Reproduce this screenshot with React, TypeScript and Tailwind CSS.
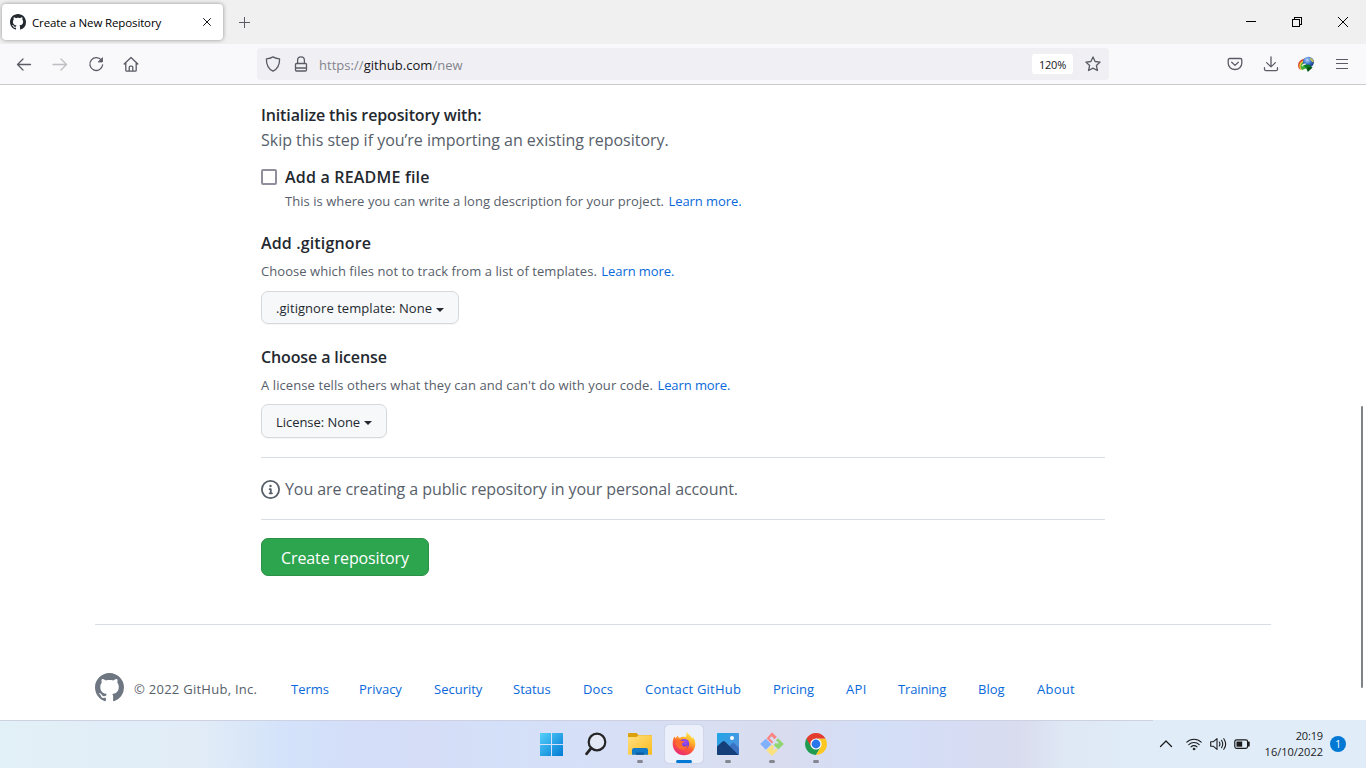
import React from "react";
import type { ReactNode } from "react";

const MARK =
  "M8 0C3.58 0 0 3.58 0 8c0 3.54 2.29 6.53 5.47 7.59.4.07.55-.17.55-.38 0-.19-.01-.82-.01-1.49-2.01.37-2.53-.49-2.69-.94-.09-.23-.48-.94-.82-1.13-.28-.15-.68-.52-.01-.53.63-.01 1.08.58 1.23.82.72 1.21 1.87.87 2.33.66.07-.52.28-.87.51-1.07-1.78-.2-3.64-.89-3.64-3.95 0-.87.31-1.59.82-2.15-.08-.2-.36-1.02.08-2.12 0 0 .67-.21 2.2.82.64-.18 1.32-.27 2-.27.68 0 1.36.09 2 .27 1.53-1.04 2.2-.82 2.2-.82.44 1.1.16 1.92.08 2.12.51.56.82 1.27.82 2.15 0 3.07-1.87 3.75-3.65 3.95.29.25.54.73.54 1.48 0 1.07-.01 1.93-.01 2.2 0 .21.15.46.55.38A8.013 8.013 0 0016 8c0-4.42-3.58-8-8-8z";

function GitHubMark({ className }: { className: string }) {
  return (
    <svg viewBox="0 0 16 16" className={className} fill="currentColor">
      <path fillRule="evenodd" d={MARK} />
    </svg>
  );
}

function Line({ children, className = "", w = 1.3, box = 16 }: { children: ReactNode; className?: string; w?: number; box?: number }) {
  return (
    <svg
      width={box}
      height={box}
      viewBox={`0 0 ${box} ${box}`}
      className={`shrink-0 ${className}`}
      fill="none"
      stroke="currentColor"
      strokeWidth={w}
      strokeLinecap="round"
      strokeLinejoin="round"
    >
      {children}
    </svg>
  );
}

function TabStrip() {
  return (
    <div className="flex h-11 shrink-0 bg-[#f0f0f0] text-black">
      <div className="mt-1 ml-0.5 flex h-9 w-[221px] items-center rounded bg-white pl-2 shadow-[0_0_4px_rgba(0,0,0,0.4)]">
        <GitHubMark className="size-4 text-[#24292f]" />
        <span className="ml-1.5 w-[171px] pt-0.5 text-[11.5px] leading-5 tracking-[-0.13px]">Create a New Repository</span>
        <Line box={8} w={1} className="text-[#15141a]">
          <path d="M.5.5l7 7M7.5.5l-7 7" />
        </Line>
      </div>
      <div className="ml-[15px] flex items-center text-[#5b5b66]">
        <svg width="12" height="12" stroke="currentColor" shapeRendering="crispEdges">
          <path d="M6.500 1v11M1 6.500h11" />
        </svg>
      </div>
      <div className="ml-auto flex items-center gap-9 pr-[18px]">
        <svg width="10" height="10" className="block" shapeRendering="crispEdges">
          <path d="M0 4.5h10" stroke="#000" />
        </svg>
        <svg width="10" height="10" fill="none" stroke="#000" shapeRendering="crispEdges">
          <path d="M.5 2.5h7v7h-7zM2.5 2V.5h7v7H8" />
        </svg>
        <svg width="10" height="10" stroke="#000" strokeWidth="1">
          <path d="M0 0l10 10M10 0L0 10" />
        </svg>
      </div>
    </div>
  );
}

function DownloadManagerIcon() {
  return (
    <svg width="16" height="16" viewBox="0 0 16 16" className="shrink-0">
      <defs>
        <radialGradient id="globe" cx=".4" cy=".3" r=".7">
          <stop offset="0" stopColor="#b8dcff" />
          <stop offset=".5" stopColor="#3f78cf" />
          <stop offset="1" stopColor="#12337a" />
        </radialGradient>
      </defs>
      <path d="M8 2.800C3.500 2.600-.6 5.500.2 10.500c.2 1.300.8 2.300 1.800 3l6-2z" fill="#d8452c" />
      <path d="M8 4.200C4.500 4 1 6.300 1.300 10.300c.1 1.400.6 2.500 1.500 3.400l5.200-2z" fill="#f0c630" />
      <path d="M8 5.500C5 5.500 2.400 7.500 2.600 10.500c.1 1.400.7 2.600 1.600 3.500L9 12z" fill="#3fb03b" />
      <circle cx="10.400" cy="6.200" r="5.500" fill="url(#globe)" />
      <path d="M12 1.600c1.800.7 3.300 2.200 3.700 4.200-.8 1-1.400.4-2.200-.5-.8-.8-1.600-1.800-1.500-3.700z" fill="#c9bf52" />
      <path d="M4.500 8.300l7.800.8.3 1.500 1.900.8-4.700 4.400-1.500-3.400z" fill="#0c7d20" />
      <path d="M9.300 11.300l5.200.1-4.700 4.400z" fill="#084c14" />
      <path d="M3.800 10.300q1.200-2.300 4-2.100" fill="none" stroke="#e9f5dd" strokeWidth="1.200" />
    </svg>
  );
}

function Toolbar() {
  return (
    <div className="flex h-[41px] shrink-0 items-center border-b border-[#cccccd] bg-[#f9f9fb] text-[#5b5b66]">
      <div className="flex w-[241px] items-center gap-5 pl-4">
        <Line>
          <path d="M14.500 8.500H1.500M7 3L1.500 8.500 7 14" />
        </Line>
        <Line className="text-[#bdbdc3]">
          <path d="M1 8.500h13.500M9 3l5.500 5.500L9 14" />
        </Line>
        <Line w={1.3}>
          <path d="M13.700 4.700A6.400 6.400 0 1 0 14.600 9" />
          <path d="M14.500 2v4h-4z" fill="currentColor" strokeWidth={0.8} />
        </Line>
        <Line w={1.3} className="-ml-px">
          <path d="M1.200 8L8 1.500 14.800 8M2.800 6.700v7.600q0 .9.9.9h8.600q.9 0 .9-.9V6.700M6.200 15v-3.600q0-1.200 1.200-1.200h1.200q1.200 0 1.200 1.200V15" />
        </Line>
      </div>
      <div className="ml-4 flex h-8 w-[852px] items-center rounded bg-[#f0f0f4] pr-2 pl-2">
        <Line w={1.3}>
          <path d="M8 .9c2 1.200 4.200 1.800 6.600 2 .1 5.500-1.800 9.800-6.600 12.300C3.200 12.700 1.300 8.400 1.400 2.900 3.800 2.700 6 2.100 8 .9z" />
        </Line>
        <Line w={1.3} className="ml-3">
          <path d="M4.600 7.500V4.300a3.400 3.400 0 0 1 6.800 0v3.200M3.500 7.500h9q1 0 1 1v5.200q0 1.300-1.300 1.300H3.800q-1.300 0-1.300-1.300V8.500q0-1 1-1zM2.500 12h11" />
        </Line>
        <div className="mt-0.5 ml-2.5 flex-1 text-[13px] leading-5 tracking-[0.04px] text-[#84848c]">
          https://<span className="text-[#15141a]">github.com</span>/new
        </div>
        <div className="mr-3 flex h-5 w-[41px] items-center justify-center rounded-[3px] bg-white pt-0.5 text-[11px] tracking-[-0.25px] text-[#15141a]">
          120%
        </div>
        <Line w={1.3}>
          <path d="M8 .9l2.100 4.600 5 .6-3.700 3.400 1 5L8 12.100l-4.400 2.400 1-5L.9 6.100l5-.6z" />
        </Line>
      </div>
      <div className="ml-auto flex items-center gap-5 pr-4">
        <Line w={1.3}>
          <path d="M2.700 2.500h10.600q1.500 0 1.500 1.500v3.300a6.800 6.200 0 0 1-13.600 0V4q0-1.500 1.500-1.500zM4.700 6.300L8 9.400l3.300-3.100" />
        </Line>
        <Line w={1.3} className="-mr-px">
          <path d="M8 .8v10M3.600 6.600L8 10.900l4.400-4.300M1.500 11.700v1.500q0 1.500 1.500 1.500h10q1.500 0 1.500-1.500v-1.500" />
        </Line>
        <DownloadManagerIcon />
        <svg width="16" height="16" fill="none" stroke="currentColor" shapeRendering="crispEdges">
          <path d="M2 3.500h12M2 7.500h12M2 12.500h12" />
        </svg>
      </div>
    </div>
  );
}

function Learn() {
  return <a className="ml-px tracking-[-0.08px] text-[#0969da]">Learn more.</a>;
}

function Caret({ className }: { className: string }) {
  return <span className={`border-x-4 border-t-4 border-x-transparent border-t-[#24292f] ${className}`} />;
}

function NewRepositoryForm() {
  return (
    <main className="ml-[261px] flex w-[844px] flex-col items-start pt-[18px] text-base/6 text-[#24292f]">
      <h2 className="font-semibold tracking-[-0.13px]">Initialize this repository with:</h2>
      <p className="mt-px tracking-[-0.01px] text-[#57606a]">Skip this step if you’re importing an existing repository.</p>

      <label className="mt-[13px] flex h-6 items-center gap-2">
        <span className="size-4 rounded-xs border-2 border-[#8f8f9d] bg-white" />
        <span className="font-semibold tracking-[0.2px]">Add a README file</span>
      </label>
      <p className="mt-0.5 ml-6 text-[13px]/5 tracking-[0.05px] text-[#57606a]">
        This is where you can write a long description for your project. <Learn />
      </p>

      <h2 className="mt-5 font-semibold tracking-[0.14px]">Add .gitignore</h2>
      <p className="mt-1.5 text-[13px]/5 tracking-[0.06px] text-[#57606a]">
        Choose which files not to track from a list of templates. <Learn />
      </p>
      <button className="mt-2.5 flex h-[33px] w-[198px] items-center rounded-[7px] border border-[#d5d8dc] bg-[#f6f8fa] pl-3.5 text-[13px]/5 tracking-[0.06px] shadow-[0_1px_0_rgba(27,31,36,0.04)]">
        .gitignore template: None
        <Caret className="mt-1 ml-1" />
      </button>

      <h2 className="mt-[21px] font-semibold tracking-[-0.12px]">Choose a license</h2>
      <p className="mt-1.5 text-[13px]/5 tracking-[0.09px] text-[#57606a]">
        A license tells others what they can and can't do with your code. <Learn />
      </p>
      <button className="mt-[9px] flex h-[34px] w-[126px] items-center rounded-[7px] border border-[#d5d8dc] bg-[#f6f8fa] pt-px pl-3.5 text-[13px]/5 tracking-[-0.05px] shadow-[0_1px_0_rgba(27,31,36,0.04)]">
        License: None
        <Caret className="mt-0.5 ml-1" />
      </button>

      <div className="mt-[19px] flex h-[63px] w-full items-center gap-[5px] border-y border-[#d8dee4] text-[#57606a]">
        <svg width="19" height="19" viewBox="0 0 16 16" fill="currentColor" className="mt-px">
          <path d="M8 1.500a6.500 6.500 0 1 0 0 13 6.500 6.500 0 0 0 0-13zM0 8a8 8 0 1 1 16 0A8 8 0 0 1 0 8zm6.500-.25A.75.75 0 0 1 7.250 7h1a.75.75 0 0 1 .75.75v2.750h.25a.75.75 0 0 1 0 1.500h-2a.75.75 0 0 1 0-1.500h.25v-2h-.25a.75.75 0 0 1-.75-.75zM8 6a1 1 0 1 1 0-2 1 1 0 0 1 0 2z" fillRule="evenodd" />
        </svg>
        <span className="tracking-[-0.075px]">You are creating a public repository in your personal account.</span>
      </div>

      <button className="mt-[18px] flex h-[38px] w-[168px] items-center justify-center rounded-[7px] border border-[#2a9147] bg-[#2da44e] pt-0.5 tracking-[-0.12px] text-white">
        Create repository
      </button>
    </main>
  );
}

function Footer() {
  return (
    <footer className="mt-12 ml-[95px] flex w-[1176px] border-t border-[#d8dee4] pt-12 text-[13px]/5 text-[#0969da]">
      <GitHubMark className="size-[29px] shrink-0 text-[#6e7781]" />
      <div className="mt-1.5 ml-2.5 flex">
        <span className="w-[157px] tracking-[0.27px] text-[#57606a]">© 2022 GitHub, Inc.</span>
        <a className="w-[68px]">Terms</a>
        <a className="w-[75px]">Privacy</a>
        <a className="w-[79px]">Security</a>
        <a className="w-[70px]">Status</a>
        <a className="w-[62px] tracking-[0.1px]">Docs</a>
        <a className="w-32 tracking-[0.23px]">Contact GitHub</a>
        <a className="w-[73px]">Pricing</a>
        <a className="w-[52px] tracking-[0.3px]">API</a>
        <a className="w-20 tracking-[-0.15px]">Training</a>
        <a className="w-[59px]">Blog</a>
        <a className="tracking-[0.25px]">About</a>
      </div>
    </footer>
  );
}

function TaskItem({ children, state = "none" }: { children: ReactNode; state?: "none" | "open" | "active" }) {
  return (
    <div className={`flex h-[38px] w-[38px] flex-col items-center rounded pt-[7px] ${state === "active" ? "bg-[#ecf0fa] shadow-[0_0_1px_rgba(90,100,140,0.5)]" : ""}`}>
      <svg width="24" height="24" viewBox="0 0 24 24" className="block">
        {children}
      </svg>
      {state === "open" && <span className="mt-1 h-[3px] w-1.5 rounded-full bg-[#83868f]" />}
      {state === "active" && <span className="mt-1 h-[3px] w-4 rounded-full bg-[#0078d4]" />}
    </div>
  );
}

function Taskbar() {
  return (
    <div className="relative flex h-12 shrink-0 bg-[linear-gradient(90deg,#e2f0f7_0px,#e1ecf7_200px,#d3e2fa_290px,#d4def8_350px,#d5ddf7_430px,#d4e0f9_500px,#d6dff6_620px,#d9dff2_700px,#d9dcef_785px,#d3dff8_880px,#d6dcf3_960px,#d9dcee_1020px,#dfe8f5_1065px,#e0edf9_1150px,#e0edf9_1366px)]">
      <div className="absolute top-0 left-0 h-px w-[1153px] bg-[#cdd1e2]" />
      <div className="ml-[533px] flex gap-1.5 pt-[5px]">
        <TaskItem>
          <defs>
            <linearGradient id="win" x1="0" y1="0" x2="24" y2="24" gradientUnits="userSpaceOnUse">
              <stop offset="0" stopColor="#56d2fb" />
              <stop offset="1" stopColor="#0078d4" />
            </linearGradient>
          </defs>
          <path d="M0 1h11v11H0zM12 1h11v11H12zM0 13h11v11H0zM12 13h11v11H12z" fill="url(#win)" />
        </TaskItem>
        <TaskItem>
          <circle cx="13" cy="10" r="8.300" fill="#e3e8f4" stroke="#252525" strokeWidth="2.200" />
          <path d="M7.200 16.200L2.500 21.800" stroke="#252525" strokeWidth="2.800" strokeLinecap="round" />
        </TaskItem>
        <TaskItem state="open">
          <defs>
            <linearGradient id="folder" x1="0" y1="0" x2="1" y2="1">
              <stop offset="0" stopColor="#ffe083" />
              <stop offset="1" stopColor="#f9bb1c" />
            </linearGradient>
          </defs>
          <path d="M0 2q0-1 1-1h7.500l2 2H23q1 0 1 1v5H0z" fill="#dda00d" />
          <path d="M0 5h8.500l2-1.800H23q1 0 1 1V22q0 .8-.8.8H.8Q0 22.800 0 22z" fill="url(#folder)" />
          <path d="M4 22.800V18q0-2 2-2h12q2 0 2 2v4.800z" fill="#137ac7" />
          <path d="M8 22.800v-1.500q0-.8.800-.8h6.400q.8 0 .8.800v1.500z" fill="#0b5ba1" />
        </TaskItem>
        <TaskItem state="active">
          <defs>
            <linearGradient id="fox" x1=".8" y1="0" x2=".25" y2="1">
              <stop offset="0" stopColor="#fff04a" />
              <stop offset=".35" stopColor="#ffb02a" />
              <stop offset=".6" stopColor="#ff5a36" />
              <stop offset="1" stopColor="#e8237f" />
            </linearGradient>
            <radialGradient id="foxCore" cx=".6" cy=".3" r=".7">
              <stop offset="0" stopColor="#a64cf5" />
              <stop offset="1" stopColor="#5a3bd0" />
            </radialGradient>
          </defs>
          <path d="M14.800 0c-1 2 .3 3.500-.8 5C11.500 4.500 9 5 7.800 6 6.500 5.500 6 4.500 5.800 3.800 4.800 4.500 4.300 5.500 4 6.300 3.200 5.800 2.800 5 2.600 4.500 1 7 .7 9 .7 12a11.300 11.300 0 0 0 22.600 0c0-3-1-5.500-2.600-7-.1.8-.2 1.200-.5 1.500C18.800 3.500 16 2.500 14.800 0z" fill="url(#fox)" />
          <circle cx="12.300" cy="11.800" r="4.900" fill="url(#foxCore)" />
          <path d="M3.500 8.500c3-2 5-.8 6 .5h3c-.3 1.500-2 1.700-2.500 2.800-.3 2.800 3.300 3.800 6 1.200-.5 3.500-3.300 5.200-6 4.800C6 17 3 13.500 3.500 8.500z" fill="#ff6a30" />
        </TaskItem>
        <TaskItem state="open">
          <defs>
            <linearGradient id="sky" x1="0" y1="0" x2="1" y2="1">
              <stop offset="0" stopColor="#1fa6e8" />
              <stop offset="1" stopColor="#5d8edb" />
            </linearGradient>
            <clipPath id="photo"><rect x="1" y="1" width="22" height="22" rx="1" /></clipPath>
          </defs>
          <g clipPath="url(#photo)">
            <path d="M1 1h22v22H1z" fill="url(#sky)" />
            <path d="M13 14.500l3.500-3.500q.8-.6 1.500 0L24 17v7H13z" fill="#3a72c2" />
            <path d="M0 15.500l6.500-6q1.200-1 2.400 0L23 23.500H0z" fill="#143f79" />
            <circle cx="16" cy="6" r="2" fill="#fff" />
          </g>
        </TaskItem>
        <TaskItem state="open">
          <path d="M12 .2l4.800 4.800-2.200 2.300-3.100-3.100-2 2 3.800 3.700-1.500 1.700-5.200-5.200z" fill="#fb8585" />
          <path d="M18 6.200l5.800 5.800-5.500 5.500-4.500-4.600 2.100-2.100 1.300 1.300 1.500-1.500-2.900-2.200z" fill="#8fd673" />
          <path d="M5.800 6.700l5.500 5.500-5.500 5.500L.2 12z" fill="#81b1fb" />
          <path d="M12 12.800l2.200 2-1.500 1.600 1.600 1.500 1.700-1.500 1.800 1.800-5.800 5.700-5.700-5.600z" fill="#fbe080" />
        </TaskItem>
        <TaskItem state="open">
          <path d="M12 12L2.500 6.500A11 11 0 0 0 12 23l4.800-8.300z" fill="#209b51" />
          <path d="M12 6.500h9.500A11 11 0 0 1 12 23l4.800-8.300z" fill="#fcc821" />
          <path d="M2.500 6.500A11 11 0 0 1 21.500 6.500H12L7.200 14.700z" fill="#e33b2e" />
          <circle cx="12" cy="12" r="5.600" fill="#fff" />
          <circle cx="12" cy="12" r="4.400" fill="#2b76e8" />
        </TaskItem>
      </div>
      <div className="ml-auto flex h-12 items-center pr-5 text-[#1b1b1b]">
        <Line box={14} w={1.3}>
          <path d="M1.500 9.500L7 4l5.500 5.500" />
        </Line>
        <Line w={1.1} className="ml-[13px]">
          <path d="M.8 6.200a10.200 10.200 0 0 1 14.400 0M2.800 8.600a7.400 7.400 0 0 1 10.400 0M5 10.900a4.200 4.200 0 0 1 6 0" />
          <circle cx="8" cy="13" r=".9" fill="currentColor" strokeWidth={0.8} />
        </Line>
        <svg width="17" height="16" fill="none" stroke="currentColor" strokeWidth="1.100" strokeLinejoin="round" strokeLinecap="round" className="ml-2">
          <path d="M.7 5.800h2.500L7 2.600v10.800l-3.800-3.200H.7zM9.300 6q1.300 2 0 4M11.500 4.300q2.500 3.700 0 7.400M13.800 2.700q3.800 5.300 0 10.600" />
        </svg>
        <svg width="17" height="16" fill="none" stroke="currentColor" strokeWidth="1.200" className="ml-[7px]">
          <rect x=".8" y="3.800" width="12.800" height="8.600" rx="1.800" />
          <path d="M2.500 5.500h5.700v5.200H2.500z" fill="currentColor" stroke="none" />
          <path d="M14.800 6.300v3.400" strokeWidth="1.800" strokeLinecap="round" />
        </svg>
        <div className="ml-3 flex w-[60px] flex-col items-end text-[11px]/4">
          <span className="tracking-[-0.15px]">20:19</span>
          <span>16/10/2022</span>
        </div>
        <span className="ml-[7px] flex size-4 items-center justify-center rounded-full bg-[#0078d4] text-[10px] text-white">1</span>
      </div>
    </div>
  );
}

export default function App() {
  return (
    <div className="flex h-screen flex-col overflow-hidden bg-white font-['Open_Sans',sans-serif]">
      <TabStrip />
      <Toolbar />
      <div className="relative min-h-0 flex-1 overflow-hidden">
        <NewRepositoryForm />
        <Footer />
        <div className="absolute top-[321px] right-[3px] h-[282px] w-0.5 rounded-full bg-[#7f8388]" />
      </div>
      <Taskbar />
    </div>
  );
}
